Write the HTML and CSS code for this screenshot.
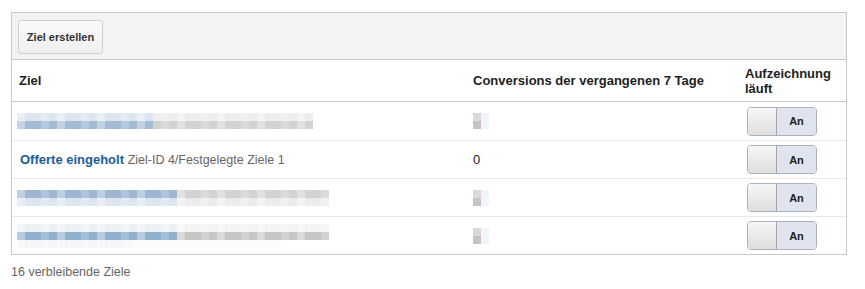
FILE: index.html
```html
<!DOCTYPE html>
<html lang="de">
<head>
  <meta charset="UTF-8">
  <title>Ziele</title>
  <link rel="stylesheet" href="styles.css">
</head>
<body>
  <div class="goals-box">
    <!-- Werkzeugleiste -->
    <div class="toolbar">
      <button class="btn">Ziel erstellen</button>
    </div>

    <table class="goals">
      <thead>
        <tr>
          <th class="col-name">Ziel</th>
          <th class="col-conv">Conversions der vergangenen 7 Tage</th>
          <th class="col-rec">Aufzeichnung<br>läuft</th>
        </tr>
      </thead>
      <tbody>
        <tr>
          <td><span class="blur blur-a"><i></i><i></i></span></td>
          <td><span class="blur-num"></span></td>
          <td><span class="toggle"><span class="knob"></span><span class="on">An</span></span></td>
        </tr>
        <tr>
          <td><a class="goal-link" href="#">Offerte eingeholt</a> <span class="goal-meta">Ziel-ID 4/Festgelegte Ziele 1</span></td>
          <td class="num">0</td>
          <td><span class="toggle"><span class="knob"></span><span class="on">An</span></span></td>
        </tr>
        <tr>
          <td><span class="blur blur-b"><i></i><i></i></span></td>
          <td><span class="blur-num"></span></td>
          <td><span class="toggle"><span class="knob"></span><span class="on">An</span></span></td>
        </tr>
        <tr>
          <td><span class="blur blur-c"><i></i><i></i><i></i></span></td>
          <td><span class="blur-num"></span></td>
          <td><span class="toggle"><span class="knob"></span><span class="on">An</span></span></td>
        </tr>
      </tbody>
    </table>
  </div>
  <p class="remaining">16 verbleibende Ziele</p>
</body>
</html>
```

FILE: styles.css
```css
body {
  margin: 0;
  padding: 12px 0 0 11px;
  font-family: "Liberation Sans", Arial, sans-serif;
  font-size: 13px;
  color: #222;
  background: #fff;
}
.goals-box {
  width: 834px;
  border: 1px solid #c8c8c8;
}
/* Werkzeugleiste */
.toolbar {
  height: 47px;
  padding: 7px 0 0 6px;
  box-sizing: border-box;
  background: #f3f3f3;
  border-bottom: 1px solid #c8c8c8;
}
.btn {
  width: 85px;
  height: 34px;
  border: 1px solid #cfcfcf;
  border-radius: 3px;
  background: linear-gradient(#fbfbfb, #efefef);
  font-family: "Liberation Sans", Arial, sans-serif;
  font-size: 11px;
  font-weight: bold;
  color: #333;
  padding: 0;
}
/* Tabelle */
.goals {
  width: 100%;
  border-collapse: collapse;
}
.goals th {
  text-align: left;
  font-weight: bold;
  font-size: 13px;
  color: #222;
  height: 41px;
  padding: 0 7px;
  vertical-align: middle;
  border-bottom: 1px solid #c8c8c8;
  line-height: 15px;
}
.col-name { width: 440px; }
.col-conv { width: 258px; }
.goals td {
  height: 37px;
  padding: 0 0 0 7px;
  border-top: 1px solid #e8e8e8;
  vertical-align: middle;
}
.goals tbody tr:first-child td { border-top: none; height: 38px; }
.goals td:first-child { padding-left: 5px; }
.goals td:last-child { padding-left: 9px; }
.goal-link {
  color: #1b5c9a;
  font-weight: bold;
  text-decoration: none;
  margin-left: 3px;
}
.goal-meta {
  color: #666;
  font-size: 12.5px;
}
.num { color: #222; }
/* verpixelter Text */
.blur {
  display: block;
  width: 296px;
}
.blur i {
  display: block;
  height: 8px;
  background:
    repeating-linear-gradient(90deg, rgba(255,255,255,.35) 0 8px, transparent 8px 24px, rgba(255,255,255,.2) 24px 32px, transparent 32px 40px),
    linear-gradient(90deg, var(--c1) 0 var(--split), var(--c2) var(--split) 100%);
}
.blur-a i:nth-child(1) { --c1: #dde6ef; --c2: #eeeeee; --split: 136px; }
.blur-a i:nth-child(2) { --c1: #a3bcd6; --c2: #d4d2d0; --split: 136px; }
.blur-b, .blur-c { width: 312px; }
.blur-b i:nth-child(1) { --c1: #9db7d2; --c2: #d2d2d2; --split: 160px; }
.blur-b i:nth-child(2) { --c1: #dde5ee; --c2: #ececec; --split: 160px; }
.blur-c i:nth-child(1) { --c1: #edf1f6; --c2: #f4f4f4; --split: 160px; }
.blur-c i:nth-child(2) { --c1: #8fb0cf; --c2: #c8c6c4; --split: 160px; }
.blur-c i:nth-child(3) { --c1: #f4f6f9; --c2: #fbfbfb; --split: 112px; width: 264px; }
.blur-num {
  display: block;
  width: 16px;
  height: 16px;
  background:
    linear-gradient(90deg, transparent 0 8px, #f1f5fb 8px 16px),
    linear-gradient(#dcd8d8 0 8px, #c4c4c4 8px 16px) 0 0 / 8px 16px no-repeat;
}
/* Schalter */
.toggle {
  display: inline-flex;
  width: 70px;
  height: 29px;
  box-sizing: border-box;
  border: 1px solid #a9b1c1;
  border-radius: 4px;
  overflow: hidden;
  vertical-align: middle;
}
.knob {
  width: 28px;
  background: linear-gradient(#f6f6f6, #dedede);
  border-right: 1px solid #a5a5a5;
}
.on {
  flex: 1;
  background: #dfe4ef;
  font-size: 11px;
  font-weight: bold;
  color: #222;
  display: flex;
  align-items: center;
  justify-content: center;
}
.remaining {
  margin: 10px 0 0;
  font-size: 12.5px;
  color: #666;
}
```
